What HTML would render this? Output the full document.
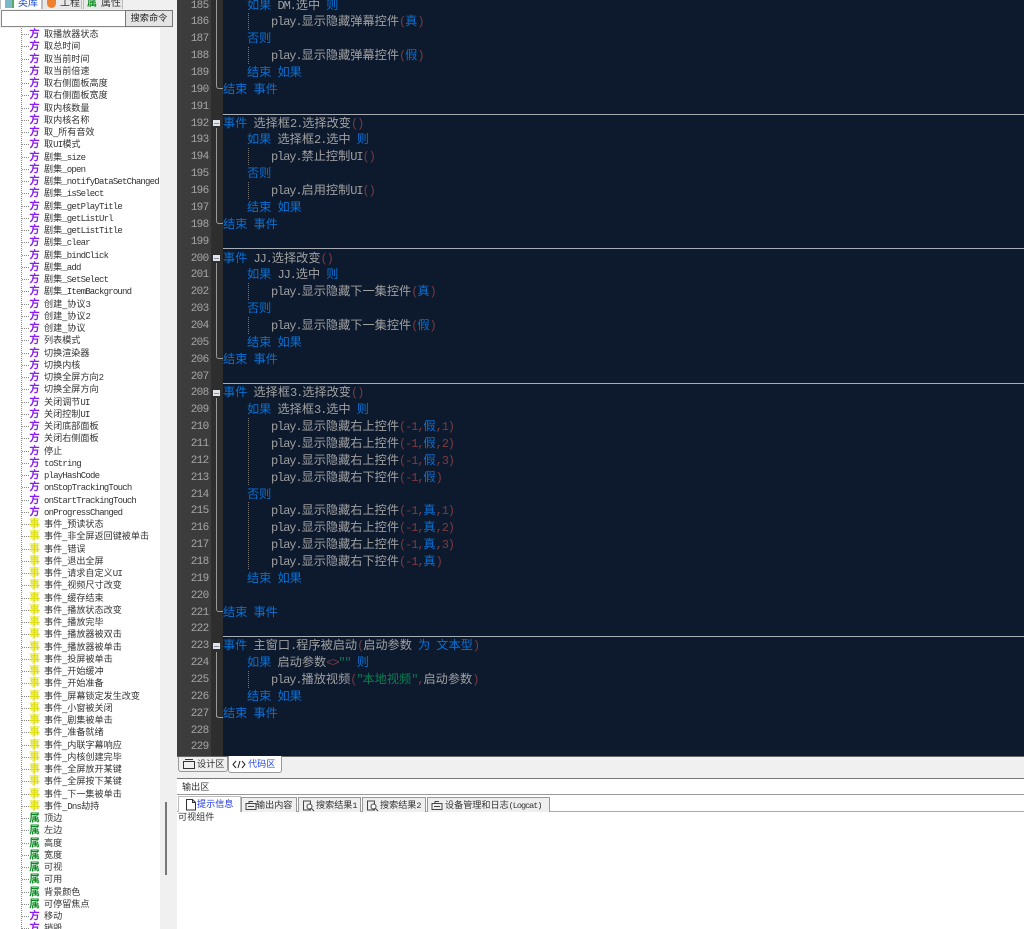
<!DOCTYPE html>
<html><head><meta charset="utf-8"><style>
html,body{margin:0;padding:0}
body{width:1024px;height:929px;overflow:hidden;position:relative;background:#f0f0f0;font-family:"Liberation Sans","Noto Sans CJK SC",sans-serif}
i{font-style:normal;font-family:"Liberation Mono",monospace}
.a{position:absolute}
#tree{left:0;top:28px;width:160px;height:901px;background:#fff;overflow:hidden}
.r{height:12.25px;position:relative;font-size:9.1px;line-height:12.25px;color:#333;white-space:nowrap}
.r i{font-size:9px;letter-spacing:-.8px}
.r b{position:absolute;left:29px;top:0;font-size:10.5px;line-height:12px;width:11px;text-align:center;font-weight:700}
.r span{position:absolute;left:44px;top:0}
.r:before{content:"";position:absolute;left:22px;top:6px;width:7px;border-top:1px dotted #888}
.f b{color:#8a1cf0}.e b{color:#dede10;font-size:11px}.g b{color:#0a8a20}
#vl{left:21px;top:28px;height:901px;border-left:1px dotted #888}
#code{left:223px;top:0;width:801px;height:756px;background:#0d1a2e}
#gut{left:177px;top:0;width:34px;height:756px;background:#3c3c3c}
#gut2{left:211px;top:0;width:12px;height:756px;background:#2e2e2e}
#lines{left:177px;top:-3.4px;width:847px}
.l{height:16.86px;line-height:16.86px;position:relative;font-size:12.2px;color:#a0a0a0;white-space:nowrap;word-spacing:2.7px}
.l i,.l .p{font-family:"Liberation Mono",monospace;font-size:12px;letter-spacing:-1.1px;word-spacing:0}
.l>u{position:absolute;left:0;top:1px;width:31.5px;text-align:right;text-decoration:none;font-family:"Liberation Mono",monospace;font-size:11px;letter-spacing:-.7px;color:#a6a6a6}
.l>span{position:absolute;left:46px}
.l>span.t1{left:70px}.l>span.t2{left:94px}
.k{color:#0870d4}.p{color:#7c3a40}.s{color:#0c7c50}
.sep{left:223px;width:801px;height:1px;background:#a8acb4}
.fold{left:213px;width:7px;height:6px;background:#dfe4ea;border:0}
.fold:after{content:"";position:absolute;left:1px;top:2.5px;width:5px;height:1px;background:#8890a0}
.gl{width:1px;background:#9a9a9a;left:216px}
.dl{border-left:1px dotted #777;left:248px;width:0}
.cv{left:216px;width:6px;height:3px;border-left:1px solid #9a9a9a;border-bottom:1px solid #9a9a9a;border-radius:0 0 0 3px}
.tab{position:absolute;font-size:9.1px;line-height:15px;color:#333;white-space:nowrap;background:#efefef;border:1px solid #999;border-bottom:0;box-sizing:border-box}
.tab i{font-size:8.5px;letter-spacing:-1px}
.tab svg{position:absolute;left:3px;top:2px}
.tab span{position:absolute;top:0}
.tt{top:-3px;width:40px;height:12px;border:1px solid #bbb;border-bottom:0;box-sizing:border-box;font-size:10px;line-height:12px;color:#333;padding-left:17px;white-space:nowrap}
</style></head><body>

<div class="a" style="left:0;top:0;width:177px;height:10px;background:#f0f0f0"></div>
<div class="a tt" style="left:0;width:42px;background:#fff;color:#1a4fd0">类库</div>
<div class="a" style="left:5px;top:0;width:9px;height:8px;background:#7ab8c8;border-right:2px solid #50b060;box-sizing:border-box"></div>
<div class="a tt" style="left:42px;width:40px;background:#e8e8e8">工程</div>
<div class="a" style="left:47px;top:0;width:9px;height:8px;background:#ee8030;border-radius:0 0 5px 5px"></div>
<div class="a tt" style="left:83px;width:40px;background:#e8e8e8">属性</div>
<div class="a" style="left:87px;top:-2px;font-size:10px;font-weight:700;line-height:11px;color:#0a8a20">属</div>

<div class="a" style="left:1px;top:10px;width:124px;height:17px;background:#fff;border:1px solid #888;border-right:0;box-sizing:border-box"></div>
<div class="a" style="left:125px;top:10px;width:48px;height:17px;background:#e4e4e4;border:1px solid #777;box-sizing:border-box;font-size:9.2px;line-height:15px;text-align:center;color:#222">搜索命令</div>

<div id="tree" class="a">
<div class="r f"><b>方</b><span>取播放器状态</span></div>
<div class="r f"><b>方</b><span>取总时间</span></div>
<div class="r f"><b>方</b><span>取当前时间</span></div>
<div class="r f"><b>方</b><span>取当前倍速</span></div>
<div class="r f"><b>方</b><span>取右侧面板高度</span></div>
<div class="r f"><b>方</b><span>取右侧面板宽度</span></div>
<div class="r f"><b>方</b><span>取内核数量</span></div>
<div class="r f"><b>方</b><span>取内核名称</span></div>
<div class="r f"><b>方</b><span>取_所有音效</span></div>
<div class="r f"><b>方</b><span>取<i>UI</i>模式</span></div>
<div class="r f"><b>方</b><span>剧集<i>_size</i></span></div>
<div class="r f"><b>方</b><span>剧集<i>_open</i></span></div>
<div class="r f"><b>方</b><span>剧集<i>_notifyDataSetChanged</i></span></div>
<div class="r f"><b>方</b><span>剧集<i>_isSelect</i></span></div>
<div class="r f"><b>方</b><span>剧集<i>_getPlayTitle</i></span></div>
<div class="r f"><b>方</b><span>剧集<i>_getListUrl</i></span></div>
<div class="r f"><b>方</b><span>剧集<i>_getListTitle</i></span></div>
<div class="r f"><b>方</b><span>剧集<i>_clear</i></span></div>
<div class="r f"><b>方</b><span>剧集<i>_bindClick</i></span></div>
<div class="r f"><b>方</b><span>剧集<i>_add</i></span></div>
<div class="r f"><b>方</b><span>剧集<i>_SetSelect</i></span></div>
<div class="r f"><b>方</b><span>剧集<i>_ItemBackground</i></span></div>
<div class="r f"><b>方</b><span>创建_协议<i>3</i></span></div>
<div class="r f"><b>方</b><span>创建_协议<i>2</i></span></div>
<div class="r f"><b>方</b><span>创建_协议</span></div>
<div class="r f"><b>方</b><span>列表模式</span></div>
<div class="r f"><b>方</b><span>切换渲染器</span></div>
<div class="r f"><b>方</b><span>切换内核</span></div>
<div class="r f"><b>方</b><span>切换全屏方向<i>2</i></span></div>
<div class="r f"><b>方</b><span>切换全屏方向</span></div>
<div class="r f"><b>方</b><span>关闭调节<i>UI</i></span></div>
<div class="r f"><b>方</b><span>关闭控制<i>UI</i></span></div>
<div class="r f"><b>方</b><span>关闭底部面板</span></div>
<div class="r f"><b>方</b><span>关闭右侧面板</span></div>
<div class="r f"><b>方</b><span>停止</span></div>
<div class="r f"><b>方</b><span><i>toString</i></span></div>
<div class="r f"><b>方</b><span><i>playHashCode</i></span></div>
<div class="r f"><b>方</b><span><i>onStopTrackingTouch</i></span></div>
<div class="r f"><b>方</b><span><i>onStartTrackingTouch</i></span></div>
<div class="r f"><b>方</b><span><i>onProgressChanged</i></span></div>
<div class="r e"><b>事</b><span>事件_预读状态</span></div>
<div class="r e"><b>事</b><span>事件_非全屏返回键被单击</span></div>
<div class="r e"><b>事</b><span>事件_错误</span></div>
<div class="r e"><b>事</b><span>事件_退出全屏</span></div>
<div class="r e"><b>事</b><span>事件_请求自定义<i>UI</i></span></div>
<div class="r e"><b>事</b><span>事件_视频尺寸改变</span></div>
<div class="r e"><b>事</b><span>事件_缓存结束</span></div>
<div class="r e"><b>事</b><span>事件_播放状态改变</span></div>
<div class="r e"><b>事</b><span>事件_播放完毕</span></div>
<div class="r e"><b>事</b><span>事件_播放器被双击</span></div>
<div class="r e"><b>事</b><span>事件_播放器被单击</span></div>
<div class="r e"><b>事</b><span>事件_投屏被单击</span></div>
<div class="r e"><b>事</b><span>事件_开始缓冲</span></div>
<div class="r e"><b>事</b><span>事件_开始准备</span></div>
<div class="r e"><b>事</b><span>事件_屏幕锁定发生改变</span></div>
<div class="r e"><b>事</b><span>事件_小窗被关闭</span></div>
<div class="r e"><b>事</b><span>事件_剧集被单击</span></div>
<div class="r e"><b>事</b><span>事件_准备就绪</span></div>
<div class="r e"><b>事</b><span>事件_内联字幕响应</span></div>
<div class="r e"><b>事</b><span>事件_内核创建完毕</span></div>
<div class="r e"><b>事</b><span>事件_全屏放开某键</span></div>
<div class="r e"><b>事</b><span>事件_全屏按下某键</span></div>
<div class="r e"><b>事</b><span>事件_下一集被单击</span></div>
<div class="r e"><b>事</b><span>事件_<i>Dns</i>劫持</span></div>
<div class="r g"><b>属</b><span>顶边</span></div>
<div class="r g"><b>属</b><span>左边</span></div>
<div class="r g"><b>属</b><span>高度</span></div>
<div class="r g"><b>属</b><span>宽度</span></div>
<div class="r g"><b>属</b><span>可视</span></div>
<div class="r g"><b>属</b><span>可用</span></div>
<div class="r g"><b>属</b><span>背景颜色</span></div>
<div class="r g"><b>属</b><span>可停留焦点</span></div>
<div class="r f"><b>方</b><span>移动</span></div>
<div class="r f"><b>方</b><span>销毁</span></div>
</div>
<div id="vl" class="a"></div>
<div class="a" style="left:165px;top:802px;width:2px;height:73px;background:#777"></div>

<div id="gut" class="a"></div>
<div id="gut2" class="a"></div>
<div id="code" class="a"></div>

<div class="a sep" style="top:114px"></div>
<div class="a sep" style="top:248px"></div>
<div class="a sep" style="top:383px"></div>
<div class="a sep" style="top:636px"></div>

<div class="a gl" style="top:0;height:86px"></div>
<div class="a gl" style="top:128px;height:92px"></div>
<div class="a gl" style="top:263px;height:92px"></div>
<div class="a gl" style="top:398px;height:210px"></div>
<div class="a gl" style="top:652px;height:65px"></div>
<div class="a cv" style="top:85px"></div>
<div class="a cv" style="top:220px"></div>
<div class="a cv" style="top:355px"></div>
<div class="a cv" style="top:608px"></div>
<div class="a cv" style="top:714px"></div>
<div class="a fold" style="top:120px"></div>
<div class="a fold" style="top:255px"></div>
<div class="a fold" style="top:390px"></div>
<div class="a fold" style="top:643px"></div>

<div class="a dl" style="top:13px;height:17px"></div>
<div class="a dl" style="top:47px;height:17px"></div>
<div class="a dl" style="top:148px;height:17px"></div>
<div class="a dl" style="top:182px;height:17px"></div>
<div class="a dl" style="top:283px;height:17px"></div>
<div class="a dl" style="top:317px;height:17px"></div>
<div class="a dl" style="top:418px;height:67px"></div>
<div class="a dl" style="top:502px;height:67px"></div>
<div class="a dl" style="top:671px;height:17px"></div>

<div id="lines" class="a">
<div class="l"><u>185</u><span class="t1"><span class="k">如果</span> <i>DM.</i>选中 <span class="k">则</span></span></div>
<div class="l"><u>186</u><span class="t2"><i>play.</i>显示隐藏弹幕控件<span class="p">(</span><span class="k">真</span><span class="p">)</span></span></div>
<div class="l"><u>187</u><span class="t1 k">否则</span></div>
<div class="l"><u>188</u><span class="t2"><i>play.</i>显示隐藏弹幕控件<span class="p">(</span><span class="k">假</span><span class="p">)</span></span></div>
<div class="l"><u>189</u><span class="t1 k">结束 如果</span></div>
<div class="l"><u>190</u><span class="k">结束 事件</span></div>
<div class="l"><u>191</u></div>
<div class="l"><u>192</u><span><span class="k">事件</span> 选择框<i>2.</i>选择改变<span class="p">()</span></span></div>
<div class="l"><u>193</u><span class="t1"><span class="k">如果</span> 选择框<i>2.</i>选中 <span class="k">则</span></span></div>
<div class="l"><u>194</u><span class="t2"><i>play.</i>禁止控制<i>UI</i><span class="p">()</span></span></div>
<div class="l"><u>195</u><span class="t1 k">否则</span></div>
<div class="l"><u>196</u><span class="t2"><i>play.</i>启用控制<i>UI</i><span class="p">()</span></span></div>
<div class="l"><u>197</u><span class="t1 k">结束 如果</span></div>
<div class="l"><u>198</u><span class="k">结束 事件</span></div>
<div class="l"><u>199</u></div>
<div class="l"><u>200</u><span><span class="k">事件</span> <i>JJ.</i>选择改变<span class="p">()</span></span></div>
<div class="l"><u>201</u><span class="t1"><span class="k">如果</span> <i>JJ.</i>选中 <span class="k">则</span></span></div>
<div class="l"><u>202</u><span class="t2"><i>play.</i>显示隐藏下一集控件<span class="p">(</span><span class="k">真</span><span class="p">)</span></span></div>
<div class="l"><u>203</u><span class="t1 k">否则</span></div>
<div class="l"><u>204</u><span class="t2"><i>play.</i>显示隐藏下一集控件<span class="p">(</span><span class="k">假</span><span class="p">)</span></span></div>
<div class="l"><u>205</u><span class="t1 k">结束 如果</span></div>
<div class="l"><u>206</u><span class="k">结束 事件</span></div>
<div class="l"><u>207</u></div>
<div class="l"><u>208</u><span><span class="k">事件</span> 选择框<i>3.</i>选择改变<span class="p">()</span></span></div>
<div class="l"><u>209</u><span class="t1"><span class="k">如果</span> 选择框<i>3.</i>选中 <span class="k">则</span></span></div>
<div class="l"><u>210</u><span class="t2"><i>play.</i>显示隐藏右上控件<span class="p">(-1,</span><span class="k">假</span><span class="p">,1)</span></span></div>
<div class="l"><u>211</u><span class="t2"><i>play.</i>显示隐藏右上控件<span class="p">(-1,</span><span class="k">假</span><span class="p">,2)</span></span></div>
<div class="l"><u>212</u><span class="t2"><i>play.</i>显示隐藏右上控件<span class="p">(-1,</span><span class="k">假</span><span class="p">,3)</span></span></div>
<div class="l"><u>213</u><span class="t2"><i>play.</i>显示隐藏右下控件<span class="p">(-1,</span><span class="k">假</span><span class="p">)</span></span></div>
<div class="l"><u>214</u><span class="t1 k">否则</span></div>
<div class="l"><u>215</u><span class="t2"><i>play.</i>显示隐藏右上控件<span class="p">(-1,</span><span class="k">真</span><span class="p">,1)</span></span></div>
<div class="l"><u>216</u><span class="t2"><i>play.</i>显示隐藏右上控件<span class="p">(-1,</span><span class="k">真</span><span class="p">,2)</span></span></div>
<div class="l"><u>217</u><span class="t2"><i>play.</i>显示隐藏右上控件<span class="p">(-1,</span><span class="k">真</span><span class="p">,3)</span></span></div>
<div class="l"><u>218</u><span class="t2"><i>play.</i>显示隐藏右下控件<span class="p">(-1,</span><span class="k">真</span><span class="p">)</span></span></div>
<div class="l"><u>219</u><span class="t1 k">结束 如果</span></div>
<div class="l"><u>220</u></div>
<div class="l"><u>221</u><span class="k">结束 事件</span></div>
<div class="l"><u>222</u></div>
<div class="l"><u>223</u><span><span class="k">事件</span> 主窗口<i>.</i>程序被启动<span class="p">(</span>启动参数 <span class="k">为 文本型</span><span class="p">)</span></span></div>
<div class="l"><u>224</u><span class="t1"><span class="k">如果</span> 启动参数<span class="p">&lt;&gt;</span><span class="s"><i>""</i></span> <span class="k">则</span></span></div>
<div class="l"><u>225</u><span class="t2"><i>play.</i>播放视频<span class="p">(</span><span class="s"><i>"</i>本地视频<i>"</i></span><span class="p">,</span>启动参数<span class="p">)</span></span></div>
<div class="l"><u>226</u><span class="t1 k">结束 如果</span></div>
<div class="l"><u>227</u><span class="k">结束 事件</span></div>
<div class="l"><u>228</u></div>
<div class="l"><u>229</u></div>
</div>

<div class="a" style="left:177px;top:756px;width:847px;height:22px;background:#f0f0f0;border-top:1px solid #666;box-sizing:border-box"></div>
<div class="tab" style="left:178px;top:757px;width:50px;height:15px;border-radius:0 0 3px 3px;border-bottom:1px solid #999;border-top:0">
<svg width="14" height="11" style="top:1px"><path d="M1.500 3.500h11v7h-11zM3 1.500h8" fill="none" stroke="#333"/></svg><span style="left:18px">设计区</span></div>
<div class="tab" style="left:228px;top:756px;width:54px;height:17px;background:#fff;border-radius:0 0 3px 3px;border-bottom:1px solid #999;border-top:0;color:#2244ee">
<svg width="14" height="11" style="top:3px"><path d="M4 2L1 5.500 4 9M10 2l3 3.500L10 9M8 2L6 9" fill="none" stroke="#222"/></svg><span style="left:19px;top:1px">代码区</span></div>

<div class="a" style="left:177px;top:778px;width:847px;height:151px;background:#fff;border-top:1px solid #777;box-sizing:border-box"></div>
<div class="a" style="left:177px;top:794px;width:847px;height:1px;background:#999"></div>
<div class="a" style="left:182px;top:780px;font-size:9.1px;line-height:14px;color:#333">输出区</div>
<div class="a" style="left:177px;top:811px;width:847px;height:1px;background:#aaa"></div>
<div class="tab" style="left:178px;top:796px;width:63px;height:16px;background:#fff;border-color:#bbb;border-bottom:0;color:#1c34e0">
<svg width="12" height="12" style="left:6px;top:2px"><path d="M1.500.5h6l3 3v7.500h-9zM7.500.5v3h3" fill="none" stroke="#333"/></svg><span style="left:18px">提示信息</span></div>
<div class="tab" style="left:241px;top:797px;width:56px;height:15px">
<svg width="12" height="11"><path d="M1 3.500h10v6H1zM4 3.500V1.500h4M3 6.500h6" fill="none" stroke="#444"/></svg><span style="left:14px">输出内容</span></div>
<div class="tab" style="left:298px;top:797px;width:63px;height:15px">
<svg width="13" height="12"><path d="M1.500 1h7v9h-7z" fill="none" stroke="#444"/><circle cx="7.500" cy="6.500" r="2.500" fill="#fff" stroke="#444"/><path d="M9.500 8.500L12 11" stroke="#444"/></svg><span style="left:17px">搜索结果<i>1</i></span></div>
<div class="tab" style="left:362px;top:797px;width:64px;height:15px">
<svg width="13" height="12"><path d="M1.500 1h7v9h-7z" fill="none" stroke="#444"/><circle cx="7.500" cy="6.500" r="2.500" fill="#fff" stroke="#444"/><path d="M9.500 8.500L12 11" stroke="#444"/></svg><span style="left:17px">搜索结果<i>2</i></span></div>
<div class="tab" style="left:427px;top:797px;width:123px;height:15px">
<svg width="12" height="11"><path d="M1 3.500h10v6H1zM4 3.500V1.500h4M3 6.500h6" fill="none" stroke="#444"/></svg><span style="left:17px">设备管理和日志<i>(Logcat)</i></span></div>
<div class="a" style="left:178px;top:810px;font-size:9.1px;line-height:14px;color:#333">可视组件</div>

</body></html>
